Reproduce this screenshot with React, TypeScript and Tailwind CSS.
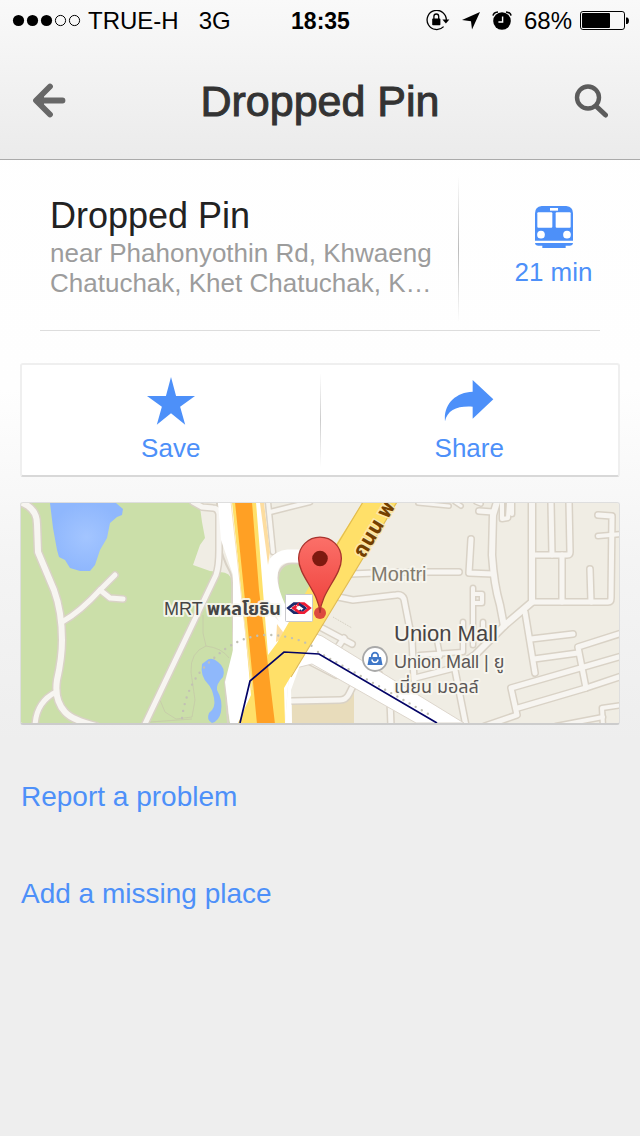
import type { ReactNode } from "react";

const MINOR_ROADS: { d: string; w: number }[] = [
  // park paths
  { d: "M21 502L28 506Q37 512 37 524L38 552L54 590Q62 612 62 640Q62 658 57 680Q54 700 65 712Q72 720 96 726", w: 6 },
  { d: "M62 622Q80 612 100 590L115 575", w: 5 },
  { d: "M100 590L110 598L123 599", w: 5 },
  { d: "M56 692Q36 702 35 726", w: 5 },
  { d: "M144 726L216 575Q219 566 219 550L219 514Q218 508 213 508L202 507L193 502", w: 5 },
  // centre
  { d: "M270 512L310 502", w: 4 },
  { d: "M268 502L273 552", w: 4 },
  { d: "M350 574L375 573M398 572L459 572", w: 5 },
  { d: "M338 597L353 600L396 595Q402 594 404 599L412 640L414 680", w: 5 },
  { d: "M322 628L352 644M336 650L344 638", w: 5 },
  { d: "M307 660L336 675", w: 5 },
  { d: "M356 680L349 694Q346 700 340 700L292 701", w: 5 },
  { d: "M356 680L380 674", w: 4 },
  { d: "M390 700L391 726", w: 5 },
  // eastern blocks
  { d: "M497 502L493 515L492 555Q494 585 500 605L504 626", w: 6 },
  { d: "M479 511L493 512", w: 5 },
  { d: "M502 502L502 519L508 518L509 502M512 502L512 514", w: 4 },
  { d: "M471 539L469 573L493 574", w: 5 },
  { d: "M473 588L473 645M473 594L482 594L482 603L473 603", w: 4 },
  { d: "M532 502L532 602L505 625L477 653", w: 6 },
  { d: "M532 602L608 602Q611 602 611 598L612 516L598 515", w: 5 },
  { d: "M598 536L622 534", w: 4 },
  { d: "M590 569L591 602", w: 5 },
  { d: "M562 555L562 602", w: 5 },
  { d: "M534 555L567 555Q570 555 570 552L569 502", w: 5 },
  { d: "M551 502L552 555", w: 5 },
  { d: "M525 612L535 673", w: 5 },
  { d: "M531 639L573 634", w: 5 },
  { d: "M534 659L578 653", w: 5 },
  { d: "M622 633L578 647L586 688L518 708", w: 5 },
  { d: "M622 656L511 688L517 715L485 726", w: 5 },
  { d: "M622 676L586 688", w: 5 },
  { d: "M622 705L602 708L603 726", w: 4 },
  { d: "M556 726L603 717", w: 4 },
  { d: "M415 678L454 668L477 653", w: 5 },
  { d: "M455 670L466 726", w: 5 },
  { d: "M418 503L449 506M455 502L461 506M476 502L481 504", w: 3 },
  { d: "M463 622L463 652M483 622L483 640M420 655L463 652M437 640L440 656", w: 4 },
];

function StatusBar() {
  return (
    <div className="grid h-10 grid-cols-[1fr_auto_1fr] items-center pl-3 pr-[11px] pt-0.5 text-2xl text-black">
      <div className="flex items-center">
        <svg width="70" height="14" viewBox="0 0 70 14" aria-hidden="true">
          <circle cx="6.5" cy="6.5" r="5.6" />
          <circle cx="20.5" cy="6.5" r="5.6" />
          <circle cx="34.5" cy="6.5" r="5.6" />
          <circle cx="48.5" cy="6.5" r="5.1" fill="none" stroke="#000" />
          <circle cx="62.5" cy="6.5" r="5.1" fill="none" stroke="#000" />
        </svg>
        <span className="ml-1.5">TRUE-H</span>
        <span className="ml-5">3G</span>
      </div>
      <span className="text-[23px] font-bold">18:35</span>
      <div className="flex items-center justify-end">
        <svg width="24" height="22" viewBox="0 0 24 22" aria-hidden="true">
          <path d="M20.3 10.2A9.6 9.6 0 1 0 17.6 16.6" fill="none" stroke="#000" strokeWidth="1.3" />
          <path d="M16.4 9.4H23.4L19.9 13.4Z" />
          <rect x="6.2" y="8.6" width="8.2" height="6.6" rx="0.8" />
          <path d="M7.9 9V6.600a2.400 2.600 0 0 1 4.800 0V9" fill="none" stroke="#000" strokeWidth="1.3" />
        </svg>
        <svg className="ml-3" width="18" height="18" viewBox="0 0 18 18" aria-hidden="true">
          <path d="M18 0L10 17.6L9 9.2L0 8Z" />
        </svg>
        <svg className="ml-3" width="20" height="20" viewBox="0 0 20 20" aria-hidden="true">
          <circle cx="10" cy="10" r="8.8" />
          <path d="M1 4.600Q1.400 1.400 6 0.900M19 4.600Q18.600 1.400 14 0.900" fill="none" stroke="#000" strokeWidth="1.5" />
          <path d="M10.6 5.500V11H6.4" fill="none" stroke="#fff" strokeWidth="1.4" />
        </svg>
        <span className="ml-3">68%</span>
        <svg className="ml-2" width="49" height="20" viewBox="0 0 49 20" aria-hidden="true">
          <rect x="0.5" y="0.5" width="44" height="18" rx="2.4" fill="none" stroke="#000" />
          <rect x="2" y="2" width="28" height="15" rx="1" />
          <path d="M46 6.5H47.4Q49 7.5 49 9.8T47.4 13H46Z" />
        </svg>
      </div>
    </div>
  );
}

function ActionButton({ label, children }: { label: string; children: ReactNode }) {
  return (
    <button type="button" className="flex flex-1 flex-col items-center pt-2 text-[26px] leading-8 text-[#4d90f9]">
      <span className="mb-1 flex h-[55px] items-center">{children}</span>
      {label}
    </button>
  );
}

function MiniMap() {
  return (
    <svg
      className="block w-full"
      viewBox="21 503 598 220"
      role="img"
      aria-label="Map"
      fontFamily="'Liberation Sans', 'Noto Sans Thai', sans-serif"
    >
      <defs>
        <linearGradient id="pin" x1="0" y1="0" x2="0" y2="1">
          <stop offset="0" stopColor="#fb7069" />
          <stop offset="1" stopColor="#ee3f3a" />
        </linearGradient>
        <radialGradient id="lake">
          <stop offset="0" stopColor="#a3c5ff" />
          <stop offset="1" stopColor="#8fb7fd" />
        </radialGradient>
      </defs>
      <rect x="21" y="503" width="598" height="220" fill="#f0ede4" />
      <path
        d="M21 503H193L200 507L202 522L205 538L200 545L193 565L210 571L220 572Q231 572 232 582V628L233 660L225 682L227 708L230 723H21Z"
        fill="#cbdfa9"
      />
      <path d="M50 503L53 528L57 550L59 557L65 560L70 568L80 571H90L95 565L100 550L107 538L110 523L117 517L122 515L123 509L116 503Z" fill="url(#lake)" />
      <g fill="none" stroke="#c5c9a8" strokeWidth="0.8">
        <path d="M203 615L203 633L206 646Q190 652 191 672L195 700L192 717L176 719L165 712L160 700" />
        <path d="M150 722L192 719M206 646Q222 648 229 658" />
      </g>
      <path d="M206 661Q211 656 218 662Q226 668 223 677Q216 684 217 690Q223 700 221 712Q219 721 212 723Q206 720 209 713Q216 708 214 698Q212 688 208 684Q200 676 202 664Z" fill="#8fb8fb" />
      <path d="M292 702L340 703L352 692L354 688V723H292Z" fill="#e8dcbb" />

      <g fill="none" strokeLinecap="round" strokeLinejoin="round" stroke="#d9d2c6">
        {MINOR_ROADS.map((r) => (
          <path key={r.d} d={r.d} strokeWidth={r.w + 3} />
        ))}
        <path d="M217 503L219 540Q222 558 230 572Q233 578 232 600L234 655L225 682L228 723" strokeWidth="2" />
      </g>
      <g fill="none" strokeLinecap="round" strokeLinejoin="round" stroke="#f7f5f1">
        {MINOR_ROADS.map((r) => (
          <path key={r.d} d={r.d} strokeWidth={r.w} />
        ))}
      </g>
      <path d="M333 617L352 628" stroke="#cfcabc" strokeWidth="1" strokeDasharray="1 1" />

      {/* trunk roads */}
      <path d="M278 578Q279 565 292 563L304 564L312 572V590L302 600L291 624Q277 603 278 578Z" fill="#cbdfa9" stroke="#d9d2c6" strokeWidth="2" />
      <path d="M302 556H288Q271 558 271 578Q271 595 291 630" fill="none" stroke="#fff" strokeWidth="13" />
      <path d="M218 503L221 540L233 575V650L225 682L230 723H285L290 660L300 650L292 635L273 615L267 580L270 555L264 503Z" fill="#fff" />
      <path d="M296 668L316 634L322 636L464 723H416L312 664Z" fill="#fff" stroke="#ddd6cc" strokeWidth="1" />
      <path d="M289 675L285 723H292L291 690L300 665Z" fill="#fff" />
      <path d="M260 503H264L270 552L268 565ZM277 624L286 636L276 642Z" fill="#fddda0" />
      <path d="M363 502H397L294 671L284 688L285 723H238L251 695L246 640L232 502H256L268 655L277 643L310 585Z" fill="#ffe069" />
      <path d="M363 502L320 573M397 502L291 677" stroke="#e3bd4f" strokeWidth="1.2" />
      <path d="M235 502H252L259 590L275 724H257L248 630Z" fill="#ffa024" />
      <path d="M231 502L245 628L252 690" fill="none" stroke="#f8e3b4" strokeWidth="1" />

      <g fill="none" stroke="#c2c1b4" strokeWidth="2.4" strokeLinecap="round" strokeDasharray="0 7">
        <path d="M182 718Q187 680 213 659Q235 638 262 635Q290 634 312 646" />
        <path d="M318 652L432 716" />
      </g>
      <path d="M240 723L250 681L284 652L319 654L437 723" fill="none" stroke="#030366" strokeWidth="1.7" />

      {/* labels */}
      <g stroke="#f8f7f0" strokeOpacity="0.9" strokeWidth="4" strokeLinejoin="round" paintOrder="stroke">
        <text x="164" y="615" fontSize="18" fill="#454545">MRT</text>
        <text x="207" y="615" fontSize="18" fontWeight="bold" fill="#454545">พหลโยธิน</text>
        <text x="371" y="581" fontSize="20" fill="#807a6d">Montri</text>
        <text x="394" y="641" fontSize="22" fill="#484444">Union Mall</text>
        <text x="394" y="668" fontSize="18" fill="#5b5756">Union Mall | ยู</text>
        <text x="394" y="693" fontSize="18" fill="#5b5756">เนี่ยน มอลล์</text>
      </g>
      <text
        transform="translate(364 559) rotate(-59)"
        fontSize="21"
        fontWeight="bold"
        fill="#744000"
        stroke="#fbe6a8"
        strokeWidth="3"
        paintOrder="stroke"
      >
        ถนน พ
      </text>

      {/* station badge */}
      <rect x="285.5" y="594.5" width="27" height="27" rx="1" fill="#fff" stroke="#c9c9cc" />
      <g fill="none" strokeWidth="2.8">
        <path d="M301.500 610.5L298.500 612.600H294L288.500 608L294 603.600H299L305.500 608.5" stroke="#1c2a6b" />
        <path d="M297 605.5L299.500 603.600H304L309.500 608L304 612.600H299.500L293.500 608L296.500 605.800" stroke="#ee1c35" />
        <path d="M299 603.600L305.500 608.200L302 611" stroke="#1c2a6b" strokeWidth="2" />
      </g>
      <path d="M285.800 608L292.500 603V613ZM312.200 608L305.500 603V613Z" fill="none" />

      {/* shop badge */}
      <circle cx="375" cy="659" r="12" fill="#fff" stroke="#a9a9a9" strokeWidth="1.8" />
      <path d="M369 657H381L382.5 665H367.5Z" fill="#4078c8" />
      <path d="M371.8 658V656A3.2 3.4 0 0 1 378.2 656V658" fill="none" stroke="#4078c8" strokeWidth="1.7" />
      <path d="M371.8 659.5Q372.4 662.4 375 662.4T378.2 659.5" fill="none" stroke="#fff" strokeWidth="1.3" />

      {/* pin */}
      <circle cx="320" cy="613" r="6" fill="#dc4a3f" />
      <path
        d="M320 613C319 592 298.6 576 298.6 558.500A21.4 21.4 0 0 1 341.400 558.500C341.400 576 321 592 320 613Z"
        fill="url(#pin)"
        stroke="#a8332d"
        strokeWidth="1.3"
      />
      <circle cx="320" cy="558.5" r="7.8" fill="#7e190f" />
    </svg>
  );
}

export default function App() {
  return (
    <div className="min-h-screen bg-[#eeeeee] bg-[linear-gradient(180deg,#ffffff_0px,#fefefe_390px,#f4f4f4_560px,#eeeeee_740px)] font-['Liberation_Sans',Arial,sans-serif]">
      <header className="border-b border-[#aaaaaa] bg-linear-to-b from-[#f9f9f9] to-[#ebebeb]">
        <StatusBar />
        <div className="flex h-[119px] items-center justify-between px-8">
          <button type="button" aria-label="Back">
            <svg width="34" height="36" viewBox="0 0 34 36">
              <path d="M30.500 18.500H5M18 4.500L4 18.500L18 32.500" fill="none" stroke="#686868" strokeWidth="5.800" strokeLinecap="round" strokeLinejoin="round" />
              <path d="M4 18.500L12 12V25Z" fill="#686868" />
            </svg>
          </button>
          <h1 className="pt-1 text-[43px] text-[#333333] [-webkit-text-stroke:1px_#333333]">Dropped Pin</h1>
          <button type="button" aria-label="Search">
            <svg width="34" height="36" viewBox="0 0 34 36">
              <circle cx="14" cy="15.500" r="11" fill="none" stroke="#5c5c5c" strokeWidth="4.400" />
              <path d="M23 25L31.500 33" stroke="#5c5c5c" strokeWidth="5" strokeLinecap="round" />
            </svg>
          </button>
        </div>
      </header>

      <main>
        <section className="flex pt-4">
          <div className="min-w-0 flex-1 pl-[50px] pt-5">
            <h2 className="text-4xl text-[#222222]">Dropped Pin</h2>
            <p className="mr-5 mt-0.5 line-clamp-2 text-[26px] leading-[30px] text-[#9c9c9c]">
              near Phahonyothin Rd, Khwaeng
              <br />
              Chatuchak, Khet Chatuchak, K…
            </p>
          </div>
          <div className="h-[146px] w-px bg-linear-to-b from-transparent via-[#bbbbbb] to-transparent" />
          <button type="button" className="flex w-[181px] flex-col items-center pl-2 pt-[30px] text-[26px] leading-8 text-[#4d90f9]">
            <svg width="38" height="42" viewBox="0 0 114 126" fill="#4d90f9" aria-hidden="true">
              <path d="M20 0H94Q114 2 114 22V104H0V22Q0 2 20 0Z" />
              <path d="M0 111H114Q113 119 104 119H92V126H22V119H10Q1 119 0 111Z" />
              <g fill="#fff">
                <rect x="7" y="19" width="45" height="46" rx="3" />
                <rect x="62" y="19" width="45" height="46" rx="3" />
                <rect x="45" y="6" width="24" height="8" />
                <circle cx="18" cy="86" r="11.500" />
                <circle cx="96" cy="86" r="11.500" />
              </g>
            </svg>
            <span className="mt-2">21 min</span>
          </button>
        </section>
        <hr className="mx-10 mt-2 border-[#dddddd]" />

        <div className="px-5">
          <div className="mt-8 flex h-[114px] rounded-[3px] border-2 border-[#efefef] border-b-[#d8d8d8] bg-white">
            <ActionButton label="Save">
              <svg width="48" height="48" viewBox="439 85 142 142" fill="#4d90f9" aria-hidden="true">
                <path d="M510 85L525 141H581L537 173L552 226L510 192L468 226L483 173L439 141H495Z" />
              </svg>
            </ActionButton>
            <div className="my-2 w-px bg-linear-to-b from-transparent via-[#cccccc] to-transparent" />
            <ActionButton label="Share">
              <svg width="50" height="42" viewBox="376 92 150 126" fill="#4d90f9" aria-hidden="true">
                <path d="M379 216C374 165 410 129 462 127V92L524 150L462 208V172C416 169 386 182 379 216Z" />
              </svg>
            </ActionButton>
          </div>

          <div className="mt-[25px] overflow-hidden rounded-[3px] border border-[#dedede] border-b-2 border-b-[#cccccc]">
            <MiniMap />
          </div>

          <nav className="mt-14 flex flex-col items-start gap-[65px] pl-px text-[28px] leading-8 text-[#4d90f9]">
            <a href="#report">Report a problem</a>
            <a href="#add-place">Add a missing place</a>
          </nav>
        </div>
      </main>
    </div>
  );
}
